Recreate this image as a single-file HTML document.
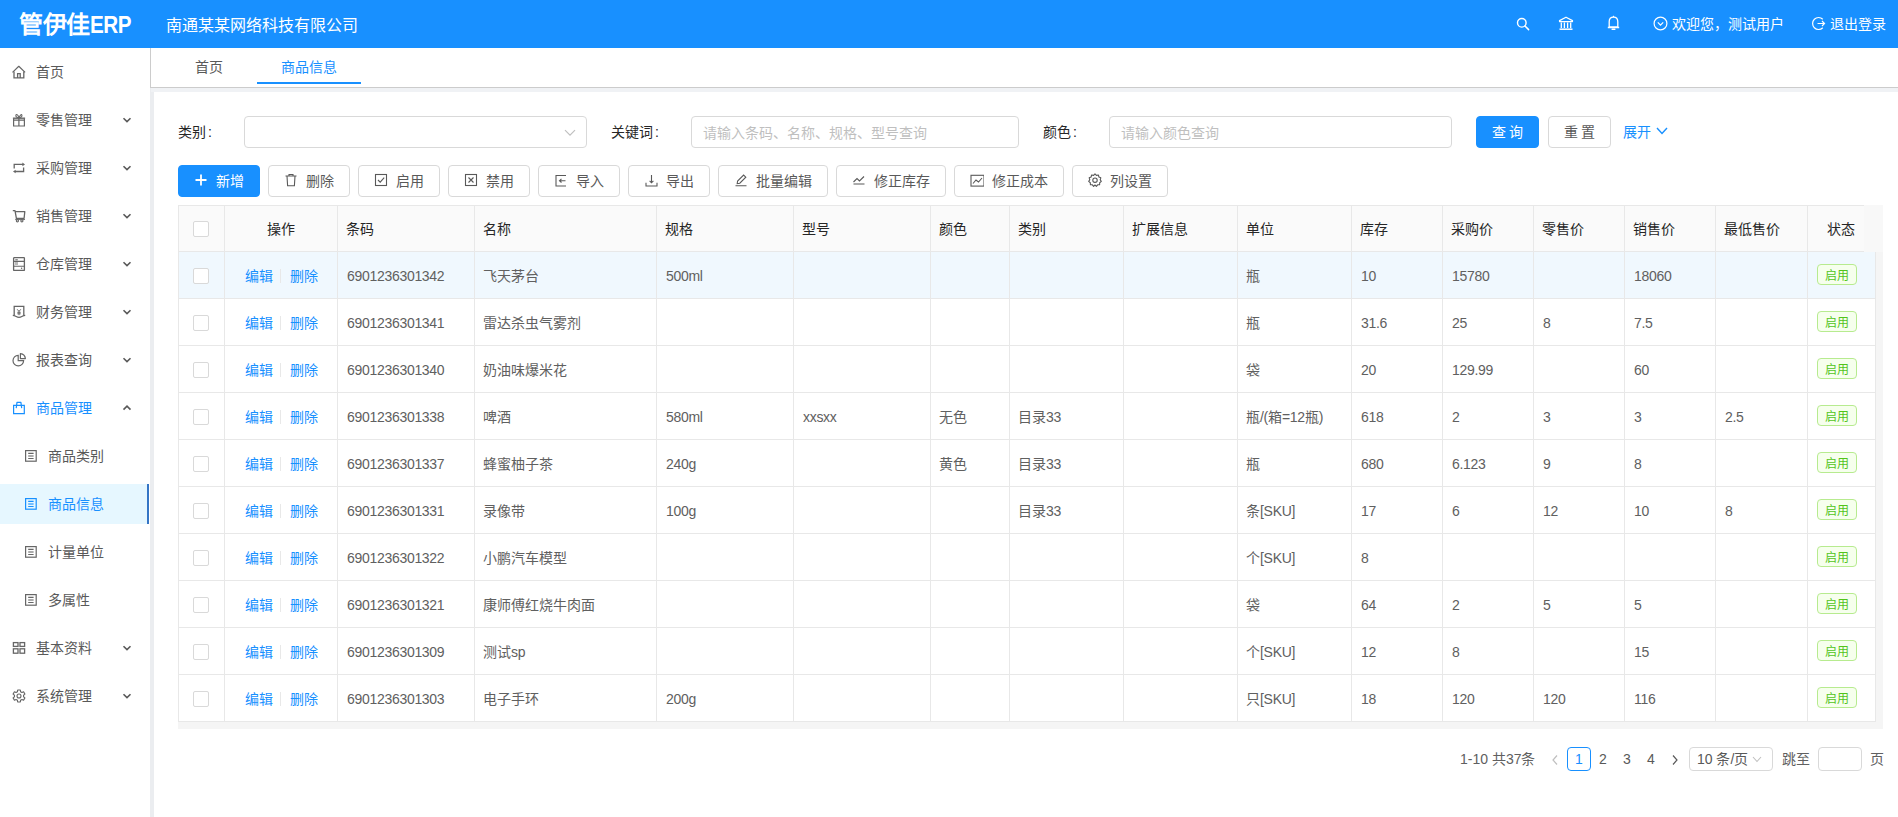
<!DOCTYPE html><html lang="zh-CN"><head><meta charset="utf-8"><style>
*{box-sizing:border-box;margin:0;padding:0}
body{width:1898px;height:817px;overflow:hidden;position:relative;background:#fff;font-family:"Liberation Sans", sans-serif;font-size:14px;color:#606060}
.abs{position:absolute}
.hdr{left:0;top:0;width:1898px;height:48px;background:#1890ff;color:#fff}
.logo{left:19px;top:9px;font-size:24px;font-weight:bold;line-height:32px;letter-spacing:-0.5px}
.corp{left:166px;top:14.5px;font-size:16px;line-height:22px}
.side{left:0;top:48px;width:150px;height:769px;background:#fff}
.sbar{left:150px;top:88px;width:4px;height:729px;background:#ebedf0}
.sline{left:150px;top:48px;width:1px;height:40px;background:#cccccc}
.mi{position:absolute;left:0;width:147px;height:40px;line-height:40px;font-size:14px;color:#595959}
.mi .ic{position:absolute;left:12px;top:14px;width:14px;height:14px}
.mi .tx{position:absolute;left:36px;top:1px}
.mi .ch{position:absolute;left:122px;top:17px;width:10px;height:8px}
.sub .ic{left:24px}
.sub .tx{left:48px}
.sel{background:#e6f7ff;color:#1890ff}
.selbar{left:147px;width:2px;background:#3575c5}
.tabs{left:151px;top:48px;width:1747px;height:40px;background:#fff;border-bottom:1px solid #cccccc}
.tab{position:absolute;top:0;line-height:38px;font-size:14px;color:#595959}
.gap{left:151px;top:88px;width:1747px;height:4px;background:#f0f2f5}
.lbl{position:absolute;font-size:14px;color:#262626;line-height:22px}
.inp{position:absolute;height:32px;border:1px solid #d9d9d9;border-radius:4px;background:#fff;font-size:14px;color:#bfbfbf;line-height:32px;padding-left:11px}
.btn{position:absolute;height:32px;border:1px solid #d9d9d9;border-radius:4px;background:#fff;font-size:14px;color:#595959;line-height:30px;text-align:center}
.btn svg{position:absolute;top:7px}
.btn .t{position:absolute;top:0}
.pri{background:#1890ff;border-color:#1890ff;color:#fff}
.tbl{left:178px;top:205px}
.cell{position:absolute;line-height:22px;font-size:14px}
.tag{position:absolute;width:40px;height:21px;border:1px solid #b7eb8f;background:#f6ffed;color:#52c41a;border-radius:4px;font-size:12px;line-height:21px;text-align:center}
.cb{position:absolute;width:16px;height:16px;border:1px solid #d9d9d9;border-radius:2px;background:#fff}
</style></head><body>
<div class="abs hdr">
<div class="abs logo">管伊佳<span style="display:inline-block;transform:scaleX(0.86);transform-origin:0 50%">ERP</span></div>
<div class="abs corp">南通某某网络科技有限公司</div>
<svg class="abs" style="left:1516px;top:17px" width="14" height="14" viewBox="0 0 14 14"><circle cx="5.8" cy="5.8" r="4.3" fill="none" stroke="#fff" stroke-width="1.4"/><path d="M9 9L12.6 12.6" stroke="#fff" stroke-width="1.5" stroke-linecap="round"/></svg>
<svg class="abs" style="left:1558px;top:16px" width="16" height="16" viewBox="0 0 16 16"><path d="M8 1.2L1.5 4.6V5.6H14.5V4.6Z" fill="none" stroke="#fff" stroke-width="1.2" stroke-linejoin="round"/><path d="M3.3 6.5V12M6.4 6.5V12M9.6 6.5V12M12.7 6.5V12" stroke="#fff" stroke-width="1.3"/><path d="M1.5 13.2H14.5" stroke="#fff" stroke-width="1.5"/></svg>
<svg class="abs" style="left:1606px;top:15px" width="15" height="17" viewBox="0 0 15 17"><path d="M7.5 2.2C4.8 2.2 3.2 4.2 3.2 6.8V11.8H11.8V6.8C11.8 4.2 10.2 2.2 7.5 2.2Z M1.8 12.5H13.2" fill="none" stroke="#fff" stroke-width="1.3"/><path d="M6.2 14.2H8.8" stroke="#fff" stroke-width="1.6" stroke-linecap="round"/><path d="M7.5 0.8V2.2" stroke="#fff" stroke-width="1.3"/></svg>
<svg class="abs" style="left:1653px;top:16px" width="15" height="15" viewBox="0 0 15 15"><circle cx="7.5" cy="7.5" r="6.4" fill="none" stroke="#fff" stroke-width="1.2"/><path d="M4.8 6.4L7.5 9.1L10.2 6.4" fill="none" stroke="#fff" stroke-width="1.2"/></svg>
<div class="abs" style="left:1672px;top:13px;font-size:14px;line-height:22px;color:#fff;font-weight:500">欢迎您，测试用户</div>
<svg class="abs" style="left:1811px;top:16px" width="15" height="15" viewBox="0 0 15 15"><path d="M11.8 3.2A6 6 0 1 0 11.8 11.8" fill="none" stroke="#fff" stroke-width="1.2"/><path d="M6.5 7.5H13.5M11 5L13.5 7.5L11 10" fill="none" stroke="#fff" stroke-width="1.2"/></svg>
<div class="abs" style="left:1830px;top:13px;font-size:14px;line-height:22px;color:#fff;font-weight:500">退出登录</div>
</div>
<div class="abs side"></div>
<div class="mi" style="top:51px;"><svg class="ic" viewBox="0 0 14 14"><path d="M0.5 7.4L6.8 1.3L13.1 7.4" fill="none" stroke="#666" stroke-width="1.2" stroke-linejoin="round"/><path d="M2 6.6V12.9H11.8V6.6M5.6 12.9V8.6H8.2V12.9" fill="none" stroke="#666" stroke-width="1.3"/></svg><span class="tx">首页</span></div>
<div class="mi" style="top:99px;"><svg class="ic" viewBox="0 0 14 14"><path d="M0.9 5.2H13.1" stroke="#666" stroke-width="1.4"/><path d="M1.6 5.6V13H12.4V5.6M6.9 5.2V13M1.6 7.2H12.4" fill="none" stroke="#666" stroke-width="1.2"/><path d="M6.9 4.6C5 4.6 3.4 3.8 3.9 2.2C4.5 0.8 6.3 1.8 6.9 4.6C8.5 1.8 9.3 0.8 9.9 2.2C10.4 3.8 8.8 4.6 6.9 4.6" fill="none" stroke="#666" stroke-width="1.1"/></svg><span class="tx">零售管理</span><svg class="ch" viewBox="0 0 10 8"><path d="M1.5 2.2L5 5.6L8.5 2.2" fill="none" stroke="#595959" stroke-width="1.6"/></svg></div>
<div class="mi" style="top:147px;"><svg class="ic" viewBox="0 0 14 14"><path d="M2.2 7.6V3.4H11" fill="none" stroke="#666" stroke-width="1.3"/><path d="M10.4 1.6L13 3.4L10.4 5.2Z" fill="#666"/><path d="M11.6 6.4V10.5H3" fill="none" stroke="#666" stroke-width="1.3"/><path d="M3.6 8.7L1 10.5L3.6 12.3Z" fill="#666"/></svg><span class="tx">采购管理</span><svg class="ch" viewBox="0 0 10 8"><path d="M1.5 2.2L5 5.6L8.5 2.2" fill="none" stroke="#595959" stroke-width="1.6"/></svg></div>
<div class="mi" style="top:195px;"><svg class="ic" viewBox="0 0 14 14"><path d="M0.8 1.6H3L4.4 9.3H12.1L12.8 2.6H3.4" fill="none" stroke="#666" stroke-width="1.3" stroke-linejoin="round"/><path d="M3.2 10.4H13" stroke="#666" stroke-width="1"/><circle cx="5.4" cy="11.8" r="1.1" fill="none" stroke="#666" stroke-width="1.1"/><circle cx="9.9" cy="11.8" r="1.1" fill="none" stroke="#666" stroke-width="1.1"/></svg><span class="tx">销售管理</span><svg class="ch" viewBox="0 0 10 8"><path d="M1.5 2.2L5 5.6L8.5 2.2" fill="none" stroke="#595959" stroke-width="1.6"/></svg></div>
<div class="mi" style="top:243px;"><svg class="ic" viewBox="0 0 14 14"><rect x="1.6" y="0.7" width="10.8" height="12.8" rx="0.5" fill="none" stroke="#666" stroke-width="1.3"/><path d="M3.3 2.8H5.8" stroke="#666" stroke-width="1.1"/><rect x="3" y="4.6" width="3" height="3.4" fill="#bbb"/><path d="M1.6 4.4H12.4M1.6 9.3H12.4" stroke="#666" stroke-width="1.1"/><circle cx="9.6" cy="11.3" r="0.7" fill="#666"/></svg><span class="tx">仓库管理</span><svg class="ch" viewBox="0 0 10 8"><path d="M1.5 2.2L5 5.6L8.5 2.2" fill="none" stroke="#595959" stroke-width="1.6"/></svg></div>
<div class="mi" style="top:291px;"><svg class="ic" viewBox="0 0 14 14"><path d="M2.2 10.6V1.4H11.8V10.6" fill="none" stroke="#666" stroke-width="1.3"/><path d="M0.8 10.3C2.5 10.5 2.5 10.6 4.2 11.6C5.8 12.6 8.2 12.6 9.8 11.6C11.5 10.6 11.5 10.5 13.2 10.3" fill="none" stroke="#666" stroke-width="1.2"/><path d="M5.2 4.3L7 6.4L8.8 4.3M7 6.4V10.2M5.3 7.3H8.7M5.3 8.8H8.7" fill="none" stroke="#666" stroke-width="1"/></svg><span class="tx">财务管理</span><svg class="ch" viewBox="0 0 10 8"><path d="M1.5 2.2L5 5.6L8.5 2.2" fill="none" stroke="#595959" stroke-width="1.6"/></svg></div>
<div class="mi" style="top:339px;"><svg class="ic" viewBox="0 0 14 14"><path d="M6.2 2.3A5.3 5.3 0 1 0 11.6 7.7H6.2Z" fill="none" stroke="#666" stroke-width="1.2"/><path d="M8.4 0.6V5.6H13.4A5.6 5.6 0 0 0 8.4 0.6Z" fill="none" stroke="#666" stroke-width="1.2" stroke-linejoin="round"/></svg><span class="tx">报表查询</span><svg class="ch" viewBox="0 0 10 8"><path d="M1.5 2.2L5 5.6L8.5 2.2" fill="none" stroke="#595959" stroke-width="1.6"/></svg></div>
<div class="mi" style="top:387px;color:#1890ff;"><svg class="ic" viewBox="0 0 14 14"><path d="M1.6 4.3H12.3V12.7H1.6Z" fill="none" stroke="#1890ff" stroke-width="1.2"/><path d="M4.2 7.2L5 1.4H8.9L9.7 7.2" fill="none" stroke="#1890ff" stroke-width="1.2" stroke-linejoin="round"/></svg><span class="tx">商品管理</span><svg class="ch" viewBox="0 0 10 8"><path d="M1.5 5.6L5 2.2L8.5 5.6" fill="none" stroke="#595959" stroke-width="1.6"/></svg></div>
<div class="mi sub" style="top:435px;"><svg class="ic" viewBox="0 0 14 14"><rect x="1.6" y="1.6" width="10.6" height="10.6" fill="none" stroke="#666" stroke-width="1.2"/><path d="M4.2 4.4H9.6M4.2 9.5H9.6" stroke="#666" stroke-width="1.1"/><rect x="4.2" y="6" width="5.4" height="2" fill="#666" opacity="0.55"/></svg><span class="tx">商品类别</span></div>
<div class="abs sel" style="left:0;top:484px;width:147px;height:40px"></div>
<div class="abs selbar" style="top:484px;height:40px"></div>
<div class="mi sub" style="top:483px;color:#1890ff"><svg class="ic" viewBox="0 0 14 14"><rect x="1.6" y="1.6" width="10.6" height="10.6" fill="none" stroke="#1890ff" stroke-width="1.2"/><path d="M4.2 4.4H9.6M4.2 9.5H9.6" stroke="#1890ff" stroke-width="1.1"/><rect x="4.2" y="6" width="5.4" height="2" fill="#1890ff" opacity="0.55"/></svg><span class="tx">商品信息</span></div>
<div class="mi sub" style="top:531px;"><svg class="ic" viewBox="0 0 14 14"><rect x="1.6" y="1.6" width="10.6" height="10.6" fill="none" stroke="#666" stroke-width="1.2"/><path d="M4.2 4.4H9.6M4.2 9.5H9.6" stroke="#666" stroke-width="1.1"/><rect x="4.2" y="6" width="5.4" height="2" fill="#666" opacity="0.55"/></svg><span class="tx">计量单位</span></div>
<div class="mi sub" style="top:579px;"><svg class="ic" viewBox="0 0 14 14"><rect x="1.6" y="1.6" width="10.6" height="10.6" fill="none" stroke="#666" stroke-width="1.2"/><path d="M4.2 4.4H9.6M4.2 9.5H9.6" stroke="#666" stroke-width="1.1"/><rect x="4.2" y="6" width="5.4" height="2" fill="#666" opacity="0.55"/></svg><span class="tx">多属性</span></div>
<div class="mi" style="top:627px"><svg class="ic" viewBox="0 0 14 14"><rect x="1.4" y="1.6" width="4.6" height="3.8" fill="none" stroke="#666" stroke-width="1.3"/><rect x="8" y="1.6" width="4.6" height="3.8" fill="none" stroke="#666" stroke-width="1.3"/><rect x="1.4" y="7.8" width="4.6" height="4.4" fill="none" stroke="#666" stroke-width="1.3"/><rect x="8" y="7.8" width="4.6" height="4.4" fill="none" stroke="#666" stroke-width="1.3"/></svg><span class="tx">基本资料</span><svg class="ch" viewBox="0 0 10 8"><path d="M1.5 2.2L5 5.6L8.5 2.2" fill="none" stroke="#595959" stroke-width="1.6"/></svg></div>
<div class="mi" style="top:675px"><svg class="ic" viewBox="0 0 14 14"><path d="M5.44 2.67 L5.65 0.95 L8.35 0.95 L8.56 2.67 L9.97 3.49 L11.56 2.80 L12.92 5.15 L11.53 6.19 L11.53 7.81 L12.92 8.85 L11.56 11.20 L9.97 10.51 L8.56 11.33 L8.35 13.05 L5.65 13.05 L5.44 11.33 L4.03 10.51 L2.44 11.20 L1.08 8.85 L2.47 7.81 L2.47 6.19 L1.08 5.15 L2.44 2.80 L4.03 3.49Z" fill="none" stroke="#666" stroke-width="1.1" stroke-linejoin="round"/><circle cx="7" cy="7" r="2" fill="none" stroke="#666" stroke-width="1.1"/></svg><span class="tx">系统管理</span><svg class="ch" viewBox="0 0 10 8"><path d="M1.5 2.2L5 5.6L8.5 2.2" fill="none" stroke="#595959" stroke-width="1.6"/></svg></div>
<div class="abs sline"></div>
<div class="abs sbar"></div>
<div class="abs tabs">
<div class="tab" style="left:44px;top:8px;line-height:22px">首页</div>
<div class="tab" style="left:130px;top:8px;line-height:22px;color:#1890ff">商品信息</div>
<div class="abs" style="left:106px;top:34px;width:104px;height:2px;background:#1890ff"></div>
</div>
<div class="abs gap"></div>
<div class="lbl" style="left:178px;top:121px">类别<span style="margin-left:2px">:</span></div>
<div class="inp" style="left:244px;top:116px;width:343px"><svg class="abs" style="left:319px;top:12px" width="12" height="8" viewBox="0 0 12 8"><path d="M1 1.2L6 6.2L11 1.2" fill="none" stroke="#bfbfbf" stroke-width="1.2"/></svg></div>
<div class="lbl" style="left:611px;top:121px">关键词<span style="margin-left:2px">:</span></div>
<div class="inp" style="left:691px;top:116px;width:328px">请输入条码、名称、规格、型号查询</div>
<div class="lbl" style="left:1043px;top:121px">颜色<span style="margin-left:2px">:</span></div>
<div class="inp" style="left:1109px;top:116px;width:343px">请输入颜色查询</div>
<div class="btn pri" style="left:1476px;top:116px;width:63px">查 询</div>
<div class="btn" style="left:1548px;top:116px;width:63px">重 置</div>
<div class="lbl" style="left:1623px;top:121px;color:#1890ff">展开</div><svg class="abs" style="left:1656px;top:126px" width="12" height="10" viewBox="0 0 12 10"><path d="M1 2L6 7.5L11 2" fill="none" stroke="#1890ff" stroke-width="1.4"/></svg>
<div class="btn pri" style="left:178px;top:165px;width:82px"><svg width="14" height="14" viewBox="0 0 14 14" style="left:15px"><path d="M7 1.5V12.5M1.5 7H12.5" fill="none" stroke="#fff" stroke-width="1.8"/></svg><span class="t" style="left:37px">新增</span></div>
<div class="btn" style="left:268px;top:165px;width:82px"><svg width="14" height="14" viewBox="0 0 14 14" style="left:15px"><path d="M1.5 3H12.5M5 3V1.5H9V3M3 3L3.6 12.8H10.4L11 3" fill="none" stroke="#595959" stroke-width="1.1"/></svg><span class="t" style="left:37px">删除</span></div>
<div class="btn" style="left:358px;top:165px;width:82px"><svg width="14" height="14" viewBox="0 0 14 14" style="left:15px"><rect x="1.5" y="1.5" width="11" height="11" fill="none" stroke="#595959" stroke-width="1.1"/><path d="M4 7L6.2 9.2L10.2 4.6" fill="none" stroke="#595959" stroke-width="1.1"/></svg><span class="t" style="left:37px">启用</span></div>
<div class="btn" style="left:448px;top:165px;width:82px"><svg width="14" height="14" viewBox="0 0 14 14" style="left:15px"><rect x="1.5" y="1.5" width="11" height="11" fill="none" stroke="#595959" stroke-width="1.1"/><path d="M4.5 4.5L9.5 9.5M9.5 4.5L4.5 9.5" fill="none" stroke="#595959" stroke-width="1.1"/></svg><span class="t" style="left:37px">禁用</span></div>
<div class="btn" style="left:538px;top:165px;width:82px"><svg width="14" height="14" viewBox="0 0 14 14" style="left:15px"><path d="M12 2.5H2V13H12M5.5 7.7H11.5M7.5 5.9L5.5 7.7L7.5 9.5" fill="none" stroke="#595959" stroke-width="1.1"/></svg><span class="t" style="left:37px">导入</span></div>
<div class="btn" style="left:628px;top:165px;width:82px"><svg width="14" height="14" viewBox="0 0 14 14" style="left:15px"><path d="M7.5 2V9.8M5.6 7.9L7.5 9.8L9.4 7.9M2 9.8V13H13V9.8" fill="none" stroke="#595959" stroke-width="1.1"/></svg><span class="t" style="left:37px">导出</span></div>
<div class="btn" style="left:718px;top:165px;width:110px"><svg width="14" height="14" viewBox="0 0 14 14" style="left:15px"><path d="M1.5 12.8H12.5M3.2 10.6L3.6 8L9.6 2L11.8 4.2L5.8 10.2Z" fill="none" stroke="#595959" stroke-width="1.1"/></svg><span class="t" style="left:37px">批量编辑</span></div>
<div class="btn" style="left:836px;top:165px;width:110px"><svg width="14" height="14" viewBox="0 0 14 14" style="left:15px"><path d="M1.5 11H12.5M1.5 9L5 5.5L7.5 8L12 3.5" fill="none" stroke="#595959" stroke-width="1.1"/></svg><span class="t" style="left:37px">修正库存</span></div>
<div class="btn" style="left:954px;top:165px;width:110px"><svg width="14" height="14" viewBox="0 0 14 14" style="left:15px"><rect x="1" y="2.3" width="13" height="10.8" fill="none" stroke="#595959" stroke-width="1.1"/><path d="M3 10.5L6 7L8.5 9L12 5" fill="none" stroke="#595959" stroke-width="1.1"/></svg><span class="t" style="left:37px">修正成本</span></div>
<div class="btn" style="left:1072px;top:165px;width:96px"><svg width="14" height="14" viewBox="0 0 14 14" style="left:15px"><path d="M7 0.9L8.4 2.4L10.4 2L10.9 4L12.8 4.8L12.2 6.8L13.3 8.4L11.7 9.7L11.6 11.7L9.6 11.8L8.4 13.4L7 12L5.6 13.4L4.4 11.8L2.4 11.7L2.3 9.7L0.7 8.4L1.8 6.8L1.2 4.8L3.1 4L3.6 2L5.6 2.4Z" fill="none" stroke="#595959" stroke-width="1.1" stroke-linejoin="round"/><circle cx="7" cy="7.2" r="2.2" fill="none" stroke="#595959" stroke-width="1.1"/></svg><span class="t" style="left:37px">列设置</span></div>
<div class="abs" style="left:178px;top:205px;width:1705px;height:524px;background:#f5f5f5"></div>
<div class="abs" style="left:1864px;top:205px;width:19px;height:47px;background:#f8f8f8"></div>
<div class="abs" style="left:178px;top:205px;width:1686px;height:47px;background:#fafafa;border-top:1px solid #e8e8e8;border-bottom:1px solid #e8e8e8"></div>
<div class="abs" style="left:178px;top:252px;width:1697px;height:47px;background:#f0f8fe;border-bottom:1px solid #e8e8e8"></div>
<div class="abs" style="left:178px;top:299px;width:1697px;height:47px;background:#fff;border-bottom:1px solid #e8e8e8"></div>
<div class="abs" style="left:178px;top:346px;width:1697px;height:47px;background:#fff;border-bottom:1px solid #e8e8e8"></div>
<div class="abs" style="left:178px;top:393px;width:1697px;height:47px;background:#fff;border-bottom:1px solid #e8e8e8"></div>
<div class="abs" style="left:178px;top:440px;width:1697px;height:47px;background:#fff;border-bottom:1px solid #e8e8e8"></div>
<div class="abs" style="left:178px;top:487px;width:1697px;height:47px;background:#fff;border-bottom:1px solid #e8e8e8"></div>
<div class="abs" style="left:178px;top:534px;width:1697px;height:47px;background:#fff;border-bottom:1px solid #e8e8e8"></div>
<div class="abs" style="left:178px;top:581px;width:1697px;height:47px;background:#fff;border-bottom:1px solid #e8e8e8"></div>
<div class="abs" style="left:178px;top:628px;width:1697px;height:47px;background:#fff;border-bottom:1px solid #e8e8e8"></div>
<div class="abs" style="left:178px;top:675px;width:1697px;height:47px;background:#fff;border-bottom:1px solid #e8e8e8"></div>
<div class="abs" style="left:178px;top:205px;width:1px;height:47px;background:#e8e8e8"></div>
<div class="abs" style="left:178px;top:252px;width:1px;height:470px;background:#e8e8e8"></div>
<div class="abs" style="left:224px;top:205px;width:1px;height:47px;background:#e8e8e8"></div>
<div class="abs" style="left:224px;top:252px;width:1px;height:470px;background:#e8e8e8"></div>
<div class="abs" style="left:337px;top:205px;width:1px;height:47px;background:#e8e8e8"></div>
<div class="abs" style="left:337px;top:252px;width:1px;height:470px;background:#e8e8e8"></div>
<div class="abs" style="left:474px;top:205px;width:1px;height:47px;background:#e8e8e8"></div>
<div class="abs" style="left:474px;top:252px;width:1px;height:470px;background:#e8e8e8"></div>
<div class="abs" style="left:656px;top:205px;width:1px;height:47px;background:#e8e8e8"></div>
<div class="abs" style="left:656px;top:252px;width:1px;height:470px;background:#e8e8e8"></div>
<div class="abs" style="left:793px;top:205px;width:1px;height:47px;background:#e8e8e8"></div>
<div class="abs" style="left:793px;top:252px;width:1px;height:470px;background:#e8e8e8"></div>
<div class="abs" style="left:930px;top:205px;width:1px;height:47px;background:#e8e8e8"></div>
<div class="abs" style="left:930px;top:252px;width:1px;height:470px;background:#e8e8e8"></div>
<div class="abs" style="left:1009px;top:205px;width:1px;height:47px;background:#e8e8e8"></div>
<div class="abs" style="left:1009px;top:252px;width:1px;height:470px;background:#e8e8e8"></div>
<div class="abs" style="left:1123px;top:205px;width:1px;height:47px;background:#e8e8e8"></div>
<div class="abs" style="left:1123px;top:252px;width:1px;height:470px;background:#e8e8e8"></div>
<div class="abs" style="left:1237px;top:205px;width:1px;height:47px;background:#e8e8e8"></div>
<div class="abs" style="left:1237px;top:252px;width:1px;height:470px;background:#e8e8e8"></div>
<div class="abs" style="left:1351px;top:205px;width:1px;height:47px;background:#e8e8e8"></div>
<div class="abs" style="left:1351px;top:252px;width:1px;height:470px;background:#e8e8e8"></div>
<div class="abs" style="left:1442px;top:205px;width:1px;height:47px;background:#e8e8e8"></div>
<div class="abs" style="left:1442px;top:252px;width:1px;height:470px;background:#e8e8e8"></div>
<div class="abs" style="left:1533px;top:205px;width:1px;height:47px;background:#e8e8e8"></div>
<div class="abs" style="left:1533px;top:252px;width:1px;height:470px;background:#e8e8e8"></div>
<div class="abs" style="left:1624px;top:205px;width:1px;height:47px;background:#e8e8e8"></div>
<div class="abs" style="left:1624px;top:252px;width:1px;height:470px;background:#e8e8e8"></div>
<div class="abs" style="left:1715px;top:205px;width:1px;height:47px;background:#e8e8e8"></div>
<div class="abs" style="left:1715px;top:252px;width:1px;height:470px;background:#e8e8e8"></div>
<div class="abs" style="left:1807px;top:205px;width:1px;height:47px;background:#e8e8e8"></div>
<div class="abs" style="left:1807px;top:252px;width:1px;height:470px;background:#e8e8e8"></div>
<div class="abs" style="left:1875px;top:252px;width:1px;height:470px;background:#e8e8e8"></div>
<div class="cb" style="left:193px;top:221px"></div>
<div class="cell" style="left:240.5px;width:80px;text-align:center;top:218px;color:#262626">操作</div>
<div class="cell" style="left:346px;top:218px;color:#262626">条码</div>
<div class="cell" style="left:483px;top:218px;color:#262626">名称</div>
<div class="cell" style="left:665px;top:218px;color:#262626">规格</div>
<div class="cell" style="left:802px;top:218px;color:#262626">型号</div>
<div class="cell" style="left:939px;top:218px;color:#262626">颜色</div>
<div class="cell" style="left:1018px;top:218px;color:#262626">类别</div>
<div class="cell" style="left:1132px;top:218px;color:#262626">扩展信息</div>
<div class="cell" style="left:1246px;top:218px;color:#262626">单位</div>
<div class="cell" style="left:1360px;top:218px;color:#262626">库存</div>
<div class="cell" style="left:1451px;top:218px;color:#262626">采购价</div>
<div class="cell" style="left:1542px;top:218px;color:#262626">零售价</div>
<div class="cell" style="left:1633px;top:218px;color:#262626">销售价</div>
<div class="cell" style="left:1724px;top:218px;color:#262626">最低售价</div>
<div class="cell" style="left:1801.25px;width:80px;text-align:center;top:218px;color:#262626">状态</div>
<div class="cb" style="left:193px;top:268px"></div>
<div class="cell" style="left:245px;top:265px;color:#1890ff">编辑</div>
<div class="abs" style="left:280px;top:269px;width:1px;height:14px;background:#e8e8e8"></div>
<div class="cell" style="left:290px;top:265px;color:#1890ff">删除</div>
<div class="cell" style="left:347px;top:265px"><span style="letter-spacing:-0.3px">6901236301342</span></div>
<div class="cell" style="left:483px;top:265px">飞天茅台</div>
<div class="cell" style="left:666px;top:265px"><span style="letter-spacing:-0.3px">500ml</span></div>
<div class="cell" style="left:1246px;top:265px">瓶</div>
<div class="cell" style="left:1361px;top:265px"><span style="letter-spacing:-0.3px">10</span></div>
<div class="cell" style="left:1452px;top:265px"><span style="letter-spacing:-0.3px">15780</span></div>
<div class="cell" style="left:1634px;top:265px"><span style="letter-spacing:-0.3px">18060</span></div>
<div class="tag" style="left:1817px;top:264px"><span style="position:relative;top:1px">启用</span></div>
<div class="cb" style="left:193px;top:315px"></div>
<div class="cell" style="left:245px;top:312px;color:#1890ff">编辑</div>
<div class="abs" style="left:280px;top:316px;width:1px;height:14px;background:#e8e8e8"></div>
<div class="cell" style="left:290px;top:312px;color:#1890ff">删除</div>
<div class="cell" style="left:347px;top:312px"><span style="letter-spacing:-0.3px">6901236301341</span></div>
<div class="cell" style="left:483px;top:312px">雷达杀虫气雾剂</div>
<div class="cell" style="left:1246px;top:312px">瓶</div>
<div class="cell" style="left:1361px;top:312px"><span style="letter-spacing:-0.3px">31.6</span></div>
<div class="cell" style="left:1452px;top:312px"><span style="letter-spacing:-0.3px">25</span></div>
<div class="cell" style="left:1543px;top:312px"><span style="letter-spacing:-0.3px">8</span></div>
<div class="cell" style="left:1634px;top:312px"><span style="letter-spacing:-0.3px">7.5</span></div>
<div class="tag" style="left:1817px;top:311px"><span style="position:relative;top:1px">启用</span></div>
<div class="cb" style="left:193px;top:362px"></div>
<div class="cell" style="left:245px;top:359px;color:#1890ff">编辑</div>
<div class="abs" style="left:280px;top:363px;width:1px;height:14px;background:#e8e8e8"></div>
<div class="cell" style="left:290px;top:359px;color:#1890ff">删除</div>
<div class="cell" style="left:347px;top:359px"><span style="letter-spacing:-0.3px">6901236301340</span></div>
<div class="cell" style="left:483px;top:359px">奶油味爆米花</div>
<div class="cell" style="left:1246px;top:359px">袋</div>
<div class="cell" style="left:1361px;top:359px"><span style="letter-spacing:-0.3px">20</span></div>
<div class="cell" style="left:1452px;top:359px"><span style="letter-spacing:-0.3px">129.99</span></div>
<div class="cell" style="left:1634px;top:359px"><span style="letter-spacing:-0.3px">60</span></div>
<div class="tag" style="left:1817px;top:358px"><span style="position:relative;top:1px">启用</span></div>
<div class="cb" style="left:193px;top:409px"></div>
<div class="cell" style="left:245px;top:406px;color:#1890ff">编辑</div>
<div class="abs" style="left:280px;top:410px;width:1px;height:14px;background:#e8e8e8"></div>
<div class="cell" style="left:290px;top:406px;color:#1890ff">删除</div>
<div class="cell" style="left:347px;top:406px"><span style="letter-spacing:-0.3px">6901236301338</span></div>
<div class="cell" style="left:483px;top:406px">啤酒</div>
<div class="cell" style="left:666px;top:406px"><span style="letter-spacing:-0.3px">580ml</span></div>
<div class="cell" style="left:803px;top:406px"><span style="letter-spacing:-0.3px">xxsxx</span></div>
<div class="cell" style="left:939px;top:406px">无色</div>
<div class="cell" style="left:1018px;top:406px">目录<span style="letter-spacing:-0.3px">33</span></div>
<div class="cell" style="left:1246px;top:406px">瓶<span style="letter-spacing:-0.3px">/(</span>箱<span style="letter-spacing:-0.3px">=12</span>瓶<span style="letter-spacing:-0.3px">)</span></div>
<div class="cell" style="left:1361px;top:406px"><span style="letter-spacing:-0.3px">618</span></div>
<div class="cell" style="left:1452px;top:406px"><span style="letter-spacing:-0.3px">2</span></div>
<div class="cell" style="left:1543px;top:406px"><span style="letter-spacing:-0.3px">3</span></div>
<div class="cell" style="left:1634px;top:406px"><span style="letter-spacing:-0.3px">3</span></div>
<div class="cell" style="left:1725px;top:406px"><span style="letter-spacing:-0.3px">2.5</span></div>
<div class="tag" style="left:1817px;top:405px"><span style="position:relative;top:1px">启用</span></div>
<div class="cb" style="left:193px;top:456px"></div>
<div class="cell" style="left:245px;top:453px;color:#1890ff">编辑</div>
<div class="abs" style="left:280px;top:457px;width:1px;height:14px;background:#e8e8e8"></div>
<div class="cell" style="left:290px;top:453px;color:#1890ff">删除</div>
<div class="cell" style="left:347px;top:453px"><span style="letter-spacing:-0.3px">6901236301337</span></div>
<div class="cell" style="left:483px;top:453px">蜂蜜柚子茶</div>
<div class="cell" style="left:666px;top:453px"><span style="letter-spacing:-0.3px">240g</span></div>
<div class="cell" style="left:939px;top:453px">黄色</div>
<div class="cell" style="left:1018px;top:453px">目录<span style="letter-spacing:-0.3px">33</span></div>
<div class="cell" style="left:1246px;top:453px">瓶</div>
<div class="cell" style="left:1361px;top:453px"><span style="letter-spacing:-0.3px">680</span></div>
<div class="cell" style="left:1452px;top:453px"><span style="letter-spacing:-0.3px">6.123</span></div>
<div class="cell" style="left:1543px;top:453px"><span style="letter-spacing:-0.3px">9</span></div>
<div class="cell" style="left:1634px;top:453px"><span style="letter-spacing:-0.3px">8</span></div>
<div class="tag" style="left:1817px;top:452px"><span style="position:relative;top:1px">启用</span></div>
<div class="cb" style="left:193px;top:503px"></div>
<div class="cell" style="left:245px;top:500px;color:#1890ff">编辑</div>
<div class="abs" style="left:280px;top:504px;width:1px;height:14px;background:#e8e8e8"></div>
<div class="cell" style="left:290px;top:500px;color:#1890ff">删除</div>
<div class="cell" style="left:347px;top:500px"><span style="letter-spacing:-0.3px">6901236301331</span></div>
<div class="cell" style="left:483px;top:500px">录像带</div>
<div class="cell" style="left:666px;top:500px"><span style="letter-spacing:-0.3px">100g</span></div>
<div class="cell" style="left:1018px;top:500px">目录<span style="letter-spacing:-0.3px">33</span></div>
<div class="cell" style="left:1246px;top:500px">条<span style="letter-spacing:-0.3px">[SKU]</span></div>
<div class="cell" style="left:1361px;top:500px"><span style="letter-spacing:-0.3px">17</span></div>
<div class="cell" style="left:1452px;top:500px"><span style="letter-spacing:-0.3px">6</span></div>
<div class="cell" style="left:1543px;top:500px"><span style="letter-spacing:-0.3px">12</span></div>
<div class="cell" style="left:1634px;top:500px"><span style="letter-spacing:-0.3px">10</span></div>
<div class="cell" style="left:1725px;top:500px"><span style="letter-spacing:-0.3px">8</span></div>
<div class="tag" style="left:1817px;top:499px"><span style="position:relative;top:1px">启用</span></div>
<div class="cb" style="left:193px;top:550px"></div>
<div class="cell" style="left:245px;top:547px;color:#1890ff">编辑</div>
<div class="abs" style="left:280px;top:551px;width:1px;height:14px;background:#e8e8e8"></div>
<div class="cell" style="left:290px;top:547px;color:#1890ff">删除</div>
<div class="cell" style="left:347px;top:547px"><span style="letter-spacing:-0.3px">6901236301322</span></div>
<div class="cell" style="left:483px;top:547px">小鹏汽车模型</div>
<div class="cell" style="left:1246px;top:547px">个<span style="letter-spacing:-0.3px">[SKU]</span></div>
<div class="cell" style="left:1361px;top:547px"><span style="letter-spacing:-0.3px">8</span></div>
<div class="tag" style="left:1817px;top:546px"><span style="position:relative;top:1px">启用</span></div>
<div class="cb" style="left:193px;top:597px"></div>
<div class="cell" style="left:245px;top:594px;color:#1890ff">编辑</div>
<div class="abs" style="left:280px;top:598px;width:1px;height:14px;background:#e8e8e8"></div>
<div class="cell" style="left:290px;top:594px;color:#1890ff">删除</div>
<div class="cell" style="left:347px;top:594px"><span style="letter-spacing:-0.3px">6901236301321</span></div>
<div class="cell" style="left:483px;top:594px">康师傅红烧牛肉面</div>
<div class="cell" style="left:1246px;top:594px">袋</div>
<div class="cell" style="left:1361px;top:594px"><span style="letter-spacing:-0.3px">64</span></div>
<div class="cell" style="left:1452px;top:594px"><span style="letter-spacing:-0.3px">2</span></div>
<div class="cell" style="left:1543px;top:594px"><span style="letter-spacing:-0.3px">5</span></div>
<div class="cell" style="left:1634px;top:594px"><span style="letter-spacing:-0.3px">5</span></div>
<div class="tag" style="left:1817px;top:593px"><span style="position:relative;top:1px">启用</span></div>
<div class="cb" style="left:193px;top:644px"></div>
<div class="cell" style="left:245px;top:641px;color:#1890ff">编辑</div>
<div class="abs" style="left:280px;top:645px;width:1px;height:14px;background:#e8e8e8"></div>
<div class="cell" style="left:290px;top:641px;color:#1890ff">删除</div>
<div class="cell" style="left:347px;top:641px"><span style="letter-spacing:-0.3px">6901236301309</span></div>
<div class="cell" style="left:483px;top:641px">测试<span style="letter-spacing:-0.3px">sp</span></div>
<div class="cell" style="left:1246px;top:641px">个<span style="letter-spacing:-0.3px">[SKU]</span></div>
<div class="cell" style="left:1361px;top:641px"><span style="letter-spacing:-0.3px">12</span></div>
<div class="cell" style="left:1452px;top:641px"><span style="letter-spacing:-0.3px">8</span></div>
<div class="cell" style="left:1634px;top:641px"><span style="letter-spacing:-0.3px">15</span></div>
<div class="tag" style="left:1817px;top:640px"><span style="position:relative;top:1px">启用</span></div>
<div class="cb" style="left:193px;top:691px"></div>
<div class="cell" style="left:245px;top:688px;color:#1890ff">编辑</div>
<div class="abs" style="left:280px;top:692px;width:1px;height:14px;background:#e8e8e8"></div>
<div class="cell" style="left:290px;top:688px;color:#1890ff">删除</div>
<div class="cell" style="left:347px;top:688px"><span style="letter-spacing:-0.3px">6901236301303</span></div>
<div class="cell" style="left:483px;top:688px">电子手环</div>
<div class="cell" style="left:666px;top:688px"><span style="letter-spacing:-0.3px">200g</span></div>
<div class="cell" style="left:1246px;top:688px">只<span style="letter-spacing:-0.3px">[SKU]</span></div>
<div class="cell" style="left:1361px;top:688px"><span style="letter-spacing:-0.3px">18</span></div>
<div class="cell" style="left:1452px;top:688px"><span style="letter-spacing:-0.3px">120</span></div>
<div class="cell" style="left:1543px;top:688px"><span style="letter-spacing:-0.3px">120</span></div>
<div class="cell" style="left:1634px;top:688px"><span style="letter-spacing:-0.3px">116</span></div>
<div class="tag" style="left:1817px;top:687px"><span style="position:relative;top:1px">启用</span></div>
<div class="cell" style="left:1460px;top:748px">1-10 共37条</div>
<svg class="abs" style="left:1551px;top:754px" width="8" height="12" viewBox="0 0 8 12"><path d="M6 1.5L2 6L6 10.5" fill="none" stroke="#bfbfbf" stroke-width="1.2"/></svg>
<div class="abs" style="left:1567px;top:747px;width:24px;height:24px;border:1px solid #1890ff;border-radius:4px;color:#1890ff;text-align:center;line-height:22px">1</div>
<div class="abs" style="left:1591px;top:747px;width:24px;text-align:center;line-height:24px;color:#595959">2</div>
<div class="abs" style="left:1615px;top:747px;width:24px;text-align:center;line-height:24px;color:#595959">3</div>
<div class="abs" style="left:1639px;top:747px;width:24px;text-align:center;line-height:24px;color:#595959">4</div>
<svg class="abs" style="left:1671px;top:754px" width="8" height="12" viewBox="0 0 8 12"><path d="M2 1.5L6 6L2 10.5" fill="none" stroke="#595959" stroke-width="1.2"/></svg>
<div class="abs" style="left:1689px;top:747px;width:84px;height:24px;border:1px solid #d9d9d9;border-radius:4px;line-height:22px;padding-left:7px;color:#595959">10 条/页<svg class="abs" style="left:62px;top:8px" width="10" height="7" viewBox="0 0 10 7"><path d="M1 1L5 5.5L9 1" fill="none" stroke="#bfbfbf" stroke-width="1.1"/></svg></div>
<div class="cell" style="left:1782px;top:748px">跳至</div>
<div class="abs" style="left:1818px;top:747px;width:44px;height:24px;border:1px solid #d9d9d9;border-radius:4px"></div>
<div class="cell" style="left:1870px;top:748px">页</div>
</body></html>
